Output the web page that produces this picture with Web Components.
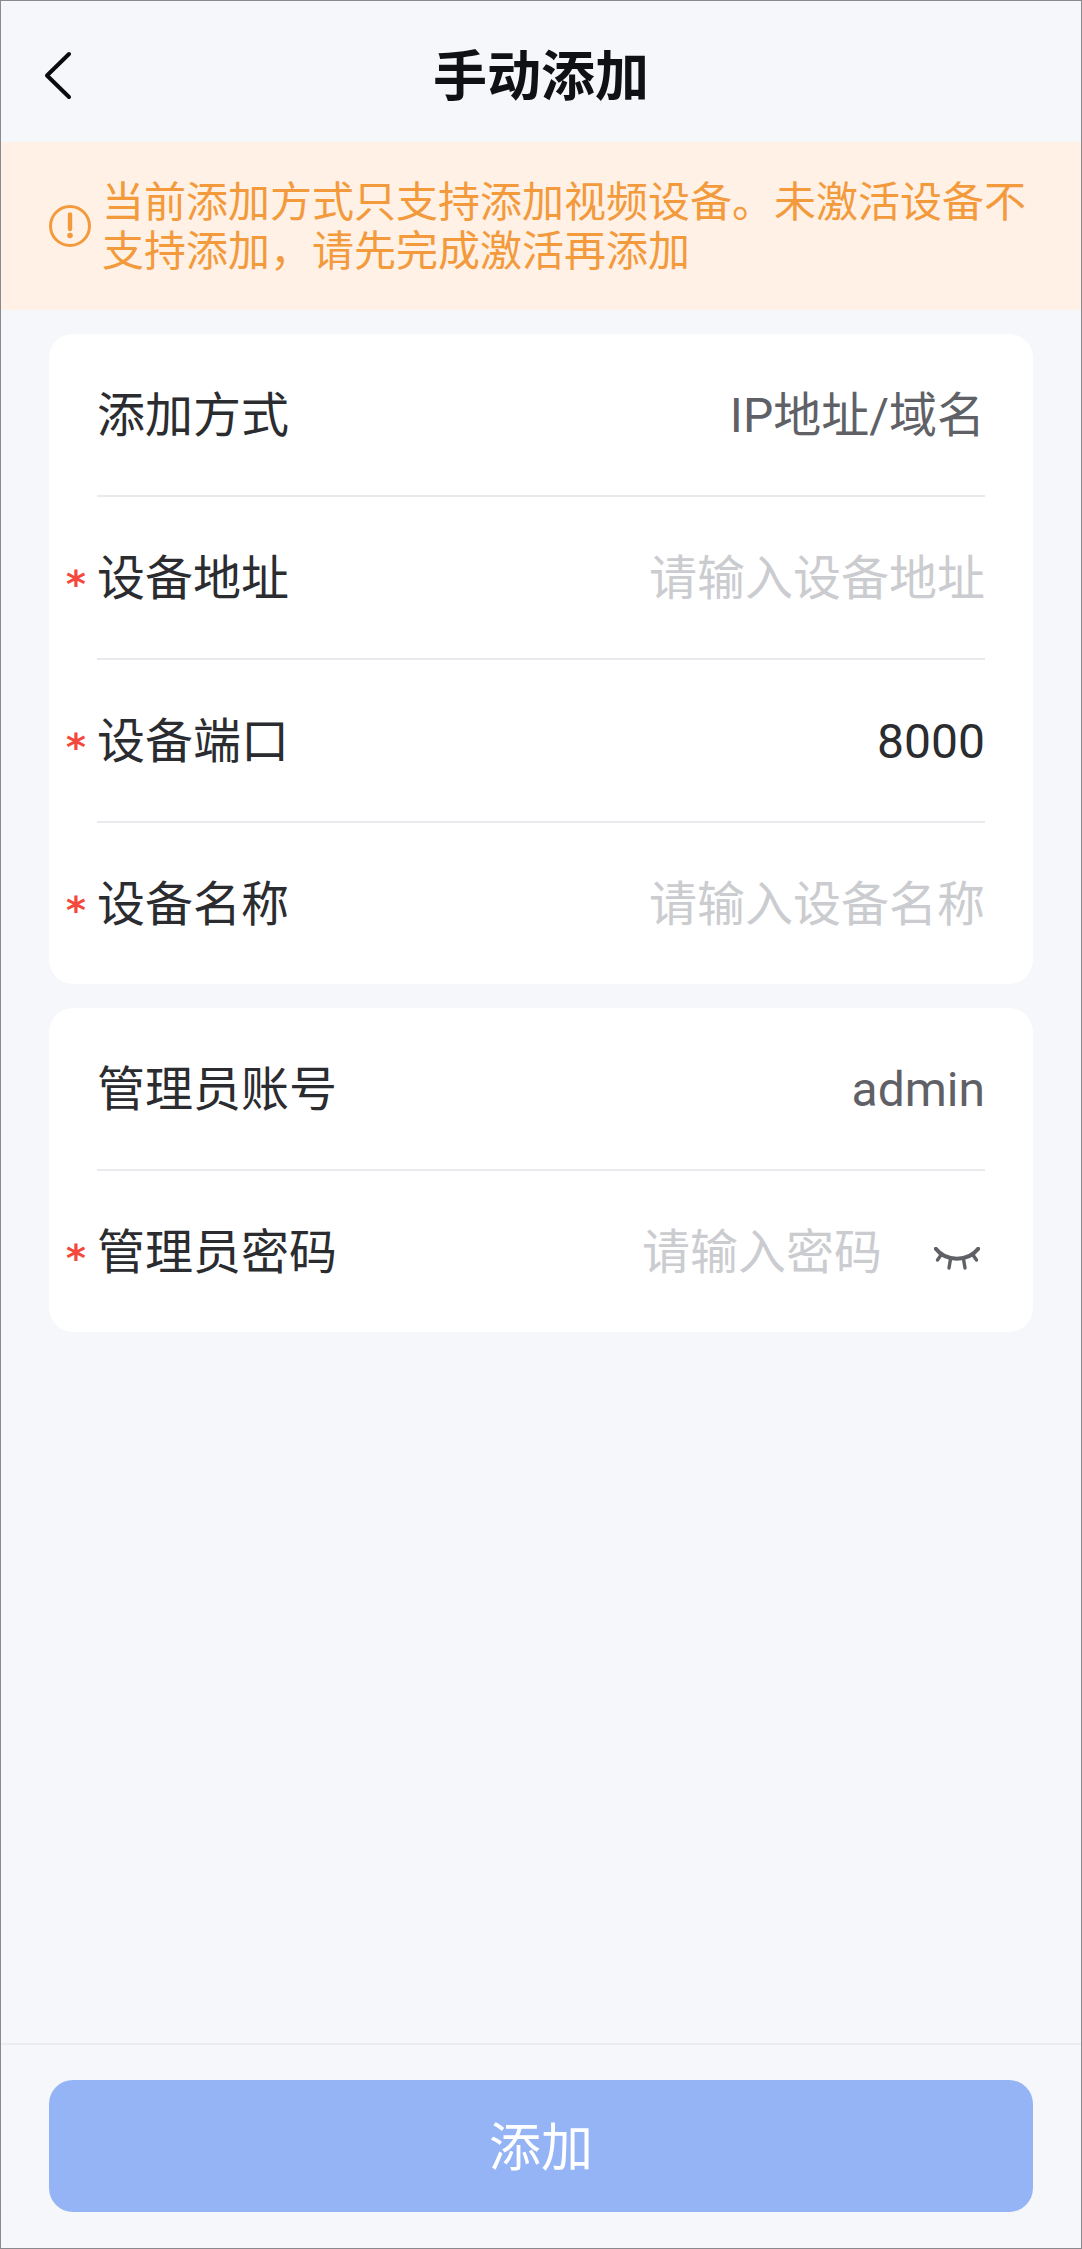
<!DOCTYPE html>
<html lang="zh">
<head>
<meta charset="utf-8">
<title>手动添加</title>
<style>
  html, body { margin: 0; padding: 0; background: #f6f7fb; }
  body { font-family: "Noto Sans CJK SC", "Noto Sans", sans-serif; }
</style>
</head>
<body>
<add-page>
  <nav-bar slot="top">手动添加</nav-bar>
  <notice-bar slot="top">当前添加方式只支持添加视频设备。未激活设备不支持添加，请先完成激活再添加</notice-bar>

  <form-card>
    <form-row label="添加方式" value="IP地址/域名" kind="muted"></form-row>
    <form-row label="设备地址" value="请输入设备地址" kind="hint" required></form-row>
    <form-row label="设备端口" value="8000" required></form-row>
    <form-row label="设备名称" value="请输入设备名称" kind="hint" required last></form-row>
  </form-card>

  <form-card>
    <form-row label="管理员账号" value="admin" kind="muted"></form-row>
    <form-row label="管理员密码" value="请输入密码" kind="hint" required last eye></form-row>
  </form-card>

  <submit-bar slot="bottom">添加</submit-bar>
</add-page>

<script>
class AddPage extends HTMLElement {
  constructor() {
    super();
    const shadow = this.attachShadow({ mode: 'open' });
    shadow.innerHTML = `
      <style>
        :host {
          display: flex;
          flex-direction: column;
          box-sizing: border-box;
          height: 2249px;
          border: 1px solid #8a8a8e;
          background: #f6f7fb;
        }
        .main {
          flex: 1;
          display: flex;
          flex-direction: column;
          gap: 24px;
          padding: 24px 48px 0;
        }
      </style>
      <slot name="top"></slot>
      <div class="main"><slot></slot></div>
      <slot name="bottom"></slot>
    `;
  }
}

class NavBar extends HTMLElement {
  constructor() {
    super();
    const shadow = this.attachShadow({ mode: 'open' });
    shadow.innerHTML = `
      <style>
        :host {
          display: flex;
          align-items: center;
          justify-content: center;
          position: relative;
          height: 141px;
          padding-top: 2px;
          box-sizing: border-box;
          font-size: 54px;
          font-weight: 700;
          color: #0f1114;
        }
        svg { position: absolute; left: 41px; top: 49px; }
      </style>
      <svg width="32" height="52" viewBox="0 0 32 52" fill="none">
        <path d="M27 4 L5 25.5 L27 47" stroke="#0b0b0d" stroke-width="4" stroke-linecap="round" stroke-linejoin="round"/>
      </svg>
      <slot></slot>
    `;
  }
}

class NoticeBar extends HTMLElement {
  constructor() {
    super();
    const shadow = this.attachShadow({ mode: 'open' });
    shadow.innerHTML = `
      <style>
        :host {
          display: flex;
          align-items: center;
          gap: 11px;
          box-sizing: border-box;
          height: 168px;
          padding: 0 40px 0 48px;
          background: #fff1e5;
          color: #f39a3d;
          font-size: 42px;
          line-height: 49px;
        }
        svg { flex: none; }
        .text { padding-bottom: 6px; }
      </style>
      <svg width="42" height="42" viewBox="0 0 42 42" fill="none">
        <circle cx="21" cy="21" r="19.5" stroke="#f39a3d" stroke-width="3"/>
        <path d="M21 9.5 V24" stroke="#f39a3d" stroke-width="4.4" stroke-linecap="round"/>
        <circle cx="21" cy="30.5" r="2.8" fill="#f39a3d"/>
      </svg>
      <div class="text"><slot></slot></div>
    `;
  }
}

class FormCard extends HTMLElement {
  constructor() {
    super();
    const shadow = this.attachShadow({ mode: 'open' });
    shadow.innerHTML = `
      <style>
        :host {
          display: block;
          background: #fff;
          border-radius: 24px;
        }
      </style>
      <slot></slot>
    `;
  }
}

class FormRow extends HTMLElement {
  constructor() {
    super();
    const shadow = this.attachShadow({ mode: 'open' });
    const kind = this.getAttribute('kind') || '';
    const star = this.hasAttribute('required') ? '<span class="star">*</span>' : '';
    const eye = this.hasAttribute('eye') ? `
      <svg class="eye" width="46" height="23" viewBox="0 0 46 23" fill="none" stroke="#606167" stroke-width="3.4" stroke-linecap="round">
        <path d="M1.8 1.8 C12 15 34 15 44.2 1.8" stroke-width="4"/>
        <path d="M7 8 L3.5 13 M16.5 12 L15 21 M29.5 12 L31 21 M39 8 L42.5 13"/>
      </svg>` : '';
    shadow.innerHTML = `
      <style>
        :host {
          display: block;
          position: relative;
          font-size: 48px;
          color: #2b2c30;
        }
        .row {
          display: flex;
          align-items: center;
          justify-content: space-between;
          box-sizing: border-box;
          height: 163px;
          margin: 0 48px;
          padding-top: 2px;
          line-height: 60px;
          font-family: Roboto, "Noto Sans CJK SC", sans-serif;
          border-bottom: 2px solid #e9e9ee;
        }
        :host([last]) .row { border-bottom: none; height: 161px; }
        .star {
          position: absolute;
          left: 17px;
          top: 57px;
          color: #f4483c;
          font-family: "DejaVu Sans", sans-serif;
          font-size: 38px;
          line-height: 60px;
          font-weight: 700;
        }
        .value { color: #2b2c30; }
        .muted { color: #606167; }
        .hint { color: #cbccd0; }
        .end { display: flex; align-items: center; }
        .eye { margin: 12px 5px 0 52px; }
      </style>
      ${star}
      <div class="row">
        <span class="label">${this.getAttribute('label')}</span>
        <span class="end"><span class="value ${kind}">${this.getAttribute('value')}</span>${eye}</span>
      </div>
    `;
  }
}

class SubmitBar extends HTMLElement {
  constructor() {
    super();
    const shadow = this.attachShadow({ mode: 'open' });
    shadow.innerHTML = `
      <style>
        :host {
          display: block;
          box-sizing: border-box;
          height: 205px;
          padding: 35px 48px 0;
          border-top: 2px solid #ebecf0;
        }
        button {
          display: block;
          width: 100%;
          height: 132px;
          padding: 0 0 6px;
          border: 0;
          border-radius: 24px;
          background: #94b4f6;
          color: #fff;
          font: inherit;
          font-size: 52px;
        }
      </style>
      <button type="button"><slot></slot></button>
    `;
  }
}

customElements.define('add-page', AddPage);
customElements.define('nav-bar', NavBar);
customElements.define('notice-bar', NoticeBar);
customElements.define('form-card', FormCard);
customElements.define('form-row', FormRow);
customElements.define('submit-bar', SubmitBar);
</script>
</body>
</html>
